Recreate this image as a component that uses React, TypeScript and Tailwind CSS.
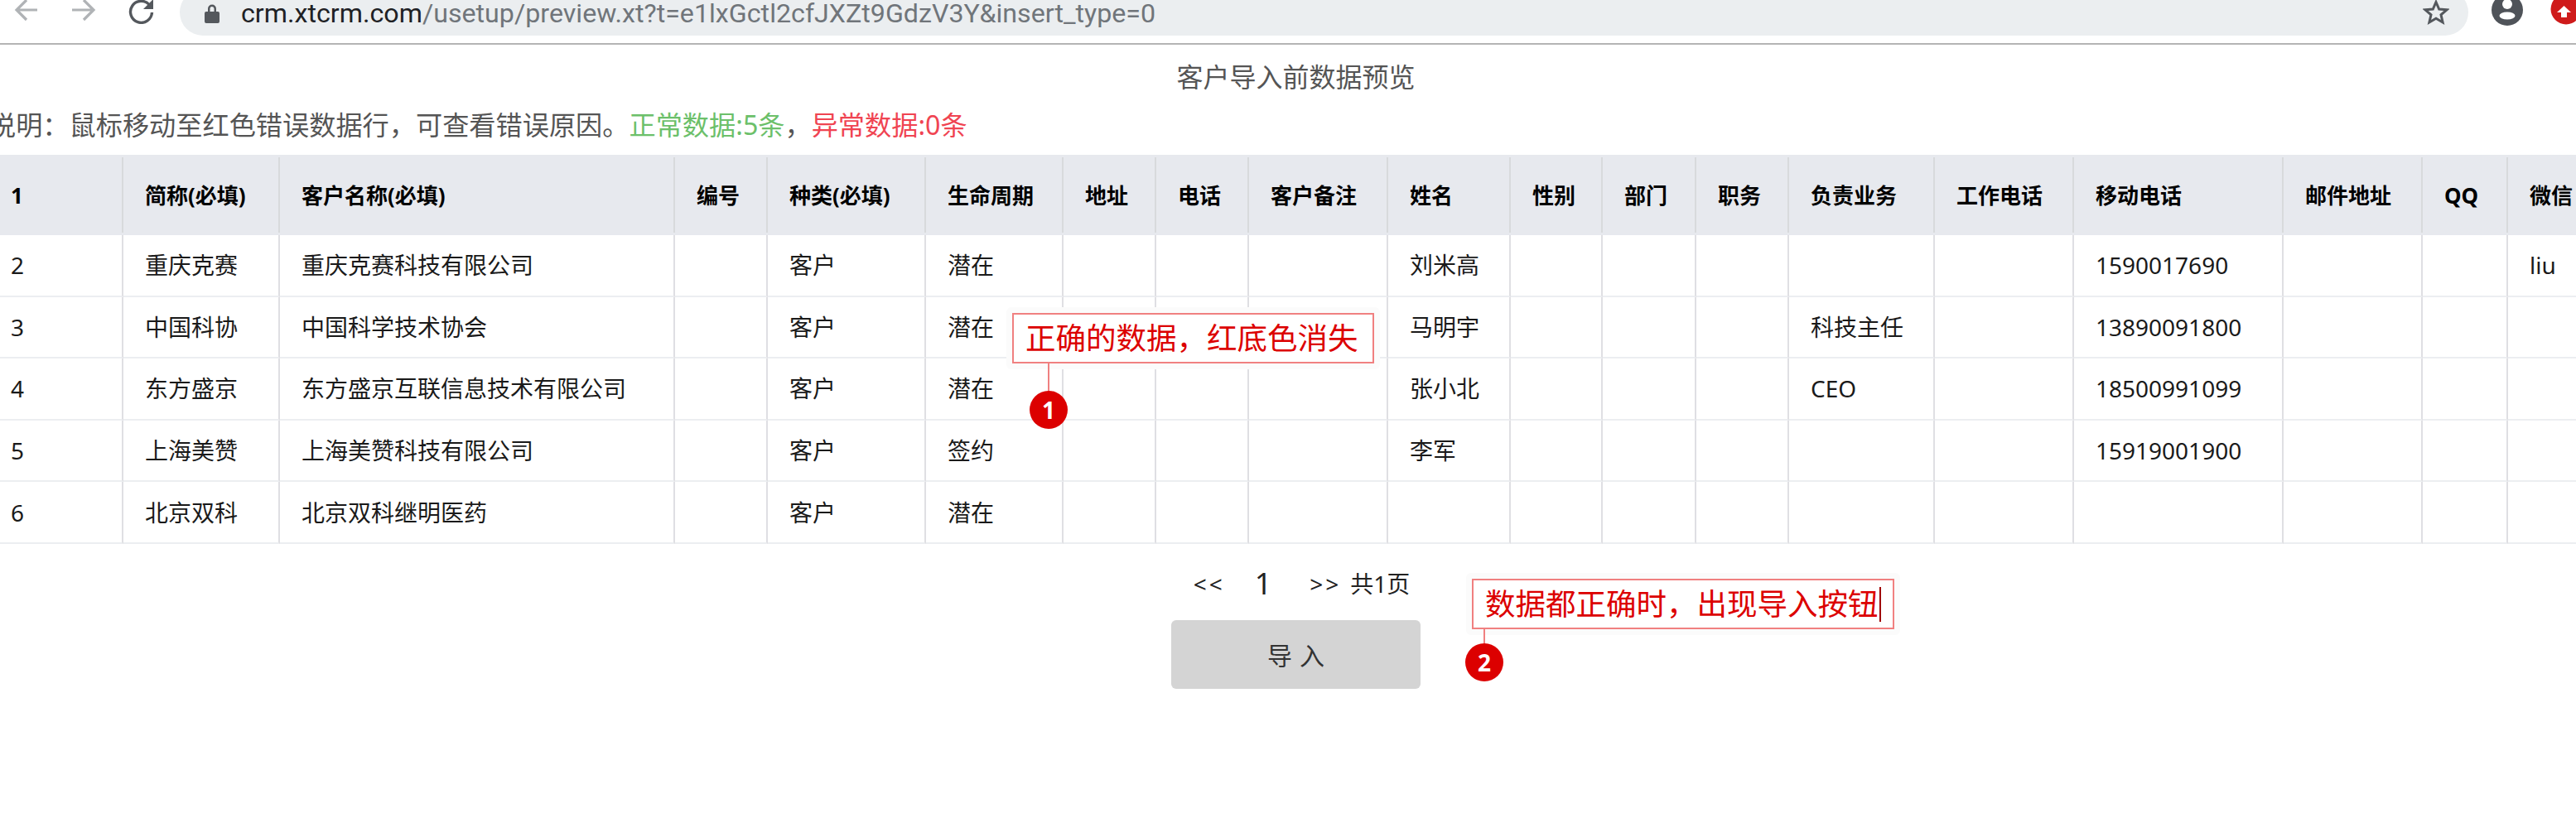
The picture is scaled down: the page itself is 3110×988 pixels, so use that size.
const F = '[font-family:"Noto_Sans","Noto_Sans_CJK_SC",sans-serif]';

const widths = [162, 189, 477, 112, 191, 166, 112, 112, 168, 148, 111, 113, 112, 176, 168, 253, 168, 103, 101];
const head = ["1", "简称(必填)", "客户名称(必填)", "编号", "种类(必填)", "生命周期", "地址", "电话", "客户备注", "姓名", "性别", "部门", "职务", "负责业务", "工作电话", "移动电话", "邮件地址", "QQ", "微信"];
const rows = [
  ["2", "重庆克赛", "重庆克赛科技有限公司", "", "客户", "潜在", "", "", "", "刘米高", "", "", "", "", "", "1590017690", "", "", "liu"],
  ["3", "中国科协", "中国科学技术协会", "", "客户", "潜在", "", "", "", "马明宇", "", "", "", "科技主任", "", "13890091800", "", "", ""],
  ["4", "东方盛京", "东方盛京互联信息技术有限公司", "", "客户", "潜在", "", "", "", "张小北", "", "", "", "CEO", "", "18500991099", "", "", ""],
  ["5", "上海美赞", "上海美赞科技有限公司", "", "客户", "签约", "", "", "", "李军", "", "", "", "", "", "15919001900", "", "", ""],
  ["6", "北京双科", "北京双科继明医药", "", "客户", "潜在", "", "", "", "", "", "", "", "", "", "", "", "", ""],
];

function Note({ text, boxClass, lineClass, circleClass, n, caret }: { text: string; boxClass: string; lineClass: string; circleClass: string; n: string; caret?: boolean }) {
  return (
    <>
      <div className={`absolute bg-[#fbfbfb] rounded-md ${boxClass} flex items-center p-[7px]`}>
        <div className="flex h-full w-full items-center border-2 border-[#f08080] bg-white pl-[14px] text-[36.500px] leading-none text-[#dc0000] whitespace-nowrap">
          {text}
          {caret && <span className="ml-[1px] h-[42px] w-[2px] bg-[#a00000]" />}
        </div>
      </div>
      <div className={`absolute w-[2px] bg-[#f08080] ${lineClass}`} />
      <div className={`absolute flex h-[46px] w-[46px] items-center justify-center rounded-full bg-[#dc0000] text-[28px] font-bold leading-none text-white ${circleClass}`}>{n}</div>
    </>
  );
}

export default function App() {
  return (
    <div className={`relative h-[988px] w-[3110px] overflow-hidden bg-white ${F}`}>
      <div className="flex h-[54px] items-start overflow-hidden border-b-2 border-[#b4b4b4]">
        <svg className="ml-[17px] mt-[-3px] shrink-0" width="30" height="30" viewBox="0 0 30 30" fill="none" stroke="#b0b3b6" strokeWidth="3.2"><path d="M28 15H3M15 3L3 15l12 12" /></svg>
        <svg className="ml-[39px] mt-[-3px] shrink-0" width="30" height="30" viewBox="0 0 30 30" fill="none" stroke="#b0b3b6" strokeWidth="3.2"><path d="M1 15h26M15 3l12 12-12 12" /></svg>
        <svg className="ml-[39px] mt-[-3px] shrink-0" width="32" height="32" viewBox="0 0 32 32" fill="none"><path d="M25.500 9a13 13 0 1 0 3 9" stroke="#54585d" strokeWidth="3.400" /><path d="M30 2v12H18z" fill="#54585d" /></svg>
        <div className="ml-[30px] mt-[-13px] flex h-[56px] w-[2763px] shrink-0 items-center rounded-full bg-[#ebeef0]">
          <svg className="ml-[30px] mt-[2px] shrink-0" width="18" height="24" viewBox="0 0 18 24"><path d="M4 10V6.500a5 5 0 0 1 10 0V10h2a2 2 0 0 1 2 2v10a2 2 0 0 1-2 2H2a2 2 0 0 1-2-2V12a2 2 0 0 1 2-2zm2.500 0h5V6.500a2.500 2.500 0 0 0-5 0z" fill="#54585d" /></svg>
          <div className="ml-[26px] mt-[2px] flex-1 whitespace-nowrap font-['Roboto'] text-[32.200px] leading-[28px] text-[#70757a]">
            <span className="text-[#202124]">crm.xtcrm.com</span>/usetup/preview.xt?t=e1lxGctl2cfJXZt9GdzV3Y&amp;insert_type=0
          </div>
          <svg className="mr-[23px] mt-[-1px] shrink-0" width="32" height="32" viewBox="0 0 32 32" fill="none" stroke="#54585d" strokeWidth="3"><path d="M16 3.500l3.700 8.500 9.300.8-7 6.100 2.100 9.100-8.100-4.800-8.100 4.800 2.100-9.100-7-6.100 9.300-.8z" /></svg>
        </div>
        <svg className="ml-[28px] mt-[-7px] shrink-0" width="38" height="38" viewBox="0 0 38 38"><circle cx="19" cy="19" r="19" fill="#4f5359" /><circle cx="19" cy="12" r="6" fill="#fff" /><ellipse cx="19" cy="26" rx="9.500" ry="4.500" fill="#fff" /></svg>
        <svg className="ml-[33px] mt-[-8px] shrink-0" width="38" height="38" viewBox="0 0 38 38"><circle cx="19" cy="19" r="18.500" fill="#cf1b1b" /><path d="M16.500 15l8.500 8h-5v6h-7v-6H8z" fill="#fff" /></svg>
      </div>

      <div className="ml-[-13px] w-[3155px]">
        <div className="mt-[16px] h-[46px] text-center text-[32px] leading-[46px] text-[#555]">客户导入前数据预览</div>
        <div className="mt-[11px] h-[48px] whitespace-nowrap text-[32.200px] leading-[48px] text-[#555]">
          说明：鼠标移动至红色错误数据行，可查看错误原因。<span className="text-[#6cc06a]">正常数据:5条</span>，<span className="text-[#f04452]">异常数据:0条</span>
        </div>
        <table className="mt-[12px] table-fixed border-separate border-spacing-0" style={{ width: 3142 }}>
          <colgroup>
            {widths.map((w, i) => <col key={i} style={{ width: w }} />)}
          </colgroup>
          <thead>
            <tr>
              {head.map((h, i) => (
                <th key={i} className="h-[97px] bg-[#e7e9ee] p-0 text-left align-middle">
                  <div className={`flex h-[91px] items-center pl-[26px] text-[26px] font-bold leading-none text-black ${i < head.length - 1 ? "border-r-2 border-[#d8dadc]" : ""}`}>{h}</div>
                </th>
              ))}
            </tr>
          </thead>
          <tbody>
            {rows.map((r, ri) => (
              <tr key={ri}>
                {r.map((c, i) => (
                  <td key={i} className={`h-[74.600px] border-b-2 border-b-[#eceef1] p-0 pl-[26px] text-[28px] leading-none text-[#1a1a1a] whitespace-nowrap ${i < r.length - 1 ? "border-r-2 border-r-[#dfdfe3]" : ""}`}>{c}</td>
                ))}
              </tr>
            ))}
          </tbody>
        </table>
        <div className="mt-[33px] flex h-[30px] items-center justify-center whitespace-nowrap pl-[14px] text-[28px] leading-none text-[#222]">
          <span className="mr-[36px] tracking-[3px]">&lt;&lt;</span>
          <span className="mr-[46px] text-[36px]">1</span>
          <span className="mr-[11px] tracking-[3px]">&gt;&gt;</span>
          <span>共1页</span>
        </div>
        <div className="mt-[29px] flex justify-center">
          <div className="flex h-[83px] w-[301px] items-center justify-center rounded-md bg-[#d4d4d4] pl-[9px] pt-[2px] text-[30px] tracking-[9px] text-[#333]">导入</div>
        </div>
      </div>

      <Note text="正确的数据，红底色消失" boxClass="left-[1215px] top-[371px] h-[75px] w-[451px]" lineClass="left-[1265px] top-[439px] h-[33px]" circleClass="left-[1243px] top-[472px]" n="1" />
      <Note text="数据都正确时，出现导入按钮" boxClass="left-[1770px] top-[692px] h-[75px] w-[524px]" lineClass="left-[1791px] top-[759px] h-[18px]" circleClass="left-[1769px] top-[777px]" n="2" caret />
    </div>
  );
}
